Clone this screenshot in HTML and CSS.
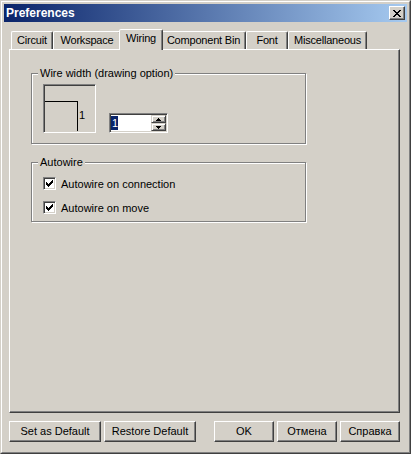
FILE: index.html
```html
<!DOCTYPE html>
<html lang="en">
<head>
    <meta charset="UTF-8">
    <title>Preferences</title>
    <link rel="stylesheet" href="styles.css">
</head>
<body>
    <div class="window">
        <div class="frame">
            <div class="titlebar">
                <span class="title">Preferences</span>
                <span class="close">
                    <svg width="8" height="7" viewBox="0 0 8 7"><path d="M0 0h2v1H0z M6 0h2v1H6z M1 1h2v1H1z M5 1h2v1H5z M2 2h4v1H2z M3 3h2v1H3z M2 4h4v1H2z M1 5h2v1H1z M5 5h2v1H5z M0 6h2v1H0z M6 6h2v1H6z" fill="#000"/></svg>
                </span>
            </div>

            <div class="client">
                <div class="tabs">
                    <div class="tab t-circuit">Circuit</div>
                    <div class="tab t-workspace">Workspace</div>
                    <div class="tab t-wiring active">Wiring</div>
                    <div class="tab t-bin">Component Bin</div>
                    <div class="tab t-font">Font</div>
                    <div class="tab t-misc">Miscellaneous</div>
                </div>

                <div class="panel">
                    <div class="group wire-group">
                        <div class="caption">Wire width (drawing option)</div>
                        <div class="wire-row">
                            <div class="preview">
                                <svg width="49" height="45" viewBox="0 0 49 45">
                                    <path d="M0 15.5H33 M32.5 15V45" stroke="#000" stroke-width="1" fill="none"/>
                                    <text x="34" y="33" class="preview-num">1</text>
                                </svg>
                            </div>
                            <div class="spin">
                                <div class="spin-field"><span class="selected">1</span></div>
                                <div class="spin-buttons">
                                    <div class="spin-btn">
                                        <svg width="5" height="3" viewBox="0 0 5 3"><path d="M2 0h1v1H2z M1 1h3v1H1z M0 2h5v1H0z" fill="#000"/></svg>
                                    </div>
                                    <div class="spin-btn">
                                        <svg width="5" height="3" viewBox="0 0 5 3"><path d="M0 0h5v1H0z M1 1h3v1H1z M2 2h1v1H2z" fill="#000"/></svg>
                                    </div>
                                </div>
                            </div>
                        </div>
                    </div>

                    <div class="group auto-group">
                        <div class="caption">Autowire</div>
                        <div class="check-row first">
                            <span class="checkbox">
                                <svg width="11" height="11" viewBox="0 0 11 11"><path d="M2 4h1v3H2z M3 5h1v3H3z M4 6h1v3H4z M5 5h1v3H5z M6 4h1v3H6z M7 3h1v3H7z M8 2h1v3H8z" fill="#000"/></svg>
                            </span>
                            <span>Autowire on connection</span>
                        </div>
                        <div class="check-row">
                            <span class="checkbox">
                                <svg width="11" height="11" viewBox="0 0 11 11"><path d="M2 4h1v3H2z M3 5h1v3H3z M4 6h1v3H4z M5 5h1v3H5z M6 4h1v3H6z M7 3h1v3H7z M8 2h1v3H8z" fill="#000"/></svg>
                            </span>
                            <span>Autowire on move</span>
                        </div>
                    </div>
                </div>

                <div class="buttons">
                    <div class="btn b-default">Set as Default</div>
                    <div class="btn b-restore">Restore Default</div>
                    <div class="btn b-ok">OK</div>
                    <div class="btn b-cancel">Отмена</div>
                    <div class="btn b-help">Справка</div>
                </div>
            </div>
        </div>
    </div>
</body>
</html>
```

FILE: styles.css
```css
* {
    margin: 0;
    padding: 0;
    box-sizing: border-box;
}

body {
    background-color: #d4d0c8;
    font-family: "Liberation Sans", Arial, sans-serif;
    font-size: 11px;
    color: #000;
}

.window {
    width: 411px;
    height: 454px;
    border: 1px solid;
    border-color: #d4d0c8 #404040 #404040 #d4d0c8;
}

.frame {
    height: 100%;
    border: 1px solid;
    border-color: #fff #808080 #808080 #fff;
    padding: 2px;
    display: flex;
    flex-direction: column;
}

/* title bar */
.titlebar {
    height: 18px;
    background: linear-gradient(to right, #0a246a, #a6caf0);
    display: flex;
    align-items: center;
    justify-content: space-between;
    padding: 0 2px 0 2px;
}

.title {
    color: #fff;
    font-weight: bold;
    font-size: 12px;
}

.close {
    width: 16px;
    height: 14px;
    background-color: #d4d0c8;
    border: 1px solid;
    border-color: #fff #404040 #404040 #fff;
    box-shadow: inset -1px -1px 0 #808080;
    display: flex;
    align-items: center;
    justify-content: center;
    padding-right: 1px;
}

.close svg {
    display: block;
}

.client {
    flex: 1;
    padding: 7px 0 0 5px;
}

/* tabs */
.tabs {
    display: flex;
    align-items: flex-end;
    height: 20px;
    padding-left: 2px;
}

.tab {
    height: 18px;
    border: 1px solid;
    border-bottom: 0;
    border-color: #fff #404040 transparent #fff;
    border-radius: 2px 2px 0 0;
    box-shadow: inset -1px 0 0 #808080;
    text-align: center;
    line-height: 17px;
    letter-spacing: -0.2px;
    white-space: nowrap;
}

.tab.active {
    height: 21px;
    margin: 0 -2px -1px;
    position: relative;
    z-index: 1;
    background-color: #d4d0c8;
}

.t-circuit { width: 42px; }
.t-workspace { width: 68px; }
.t-wiring { width: 44px; }
.t-bin { width: 85px; }
.t-font { width: 42px; }
.t-misc { width: 79px; }

.panel {
    width: 391px;
    height: 364px;
    border: 1px solid;
    border-color: #fff #404040 #404040 #fff;
    box-shadow: inset -1px -1px 0 #808080;
    padding: 23px 0 0 21px;
}

/* group boxes */
.group {
    width: 275px;
    border: 1px solid #808080;
    box-shadow: inset 1px 1px 0 #fff, 1px 1px 0 #fff;
}

.caption {
    width: max-content;
    background-color: #d4d0c8;
    line-height: 13px;
    padding: 0 2px;
    margin: -7px 0 0 6px;
}

.wire-group {
    height: 71px;
}

.wire-row {
    display: flex;
    align-items: flex-end;
    margin: 4px 0 0 11px;
}

.preview {
    width: 53px;
    height: 49px;
    border: 1px solid;
    border-color: #808080 #fff #fff #808080;
    box-shadow: inset 1px 1px 0 #404040, inset -1px -1px 0 #d4d0c8;
    padding: 1px;
}

.preview svg {
    display: block;
}

.preview-num {
    font-family: "Liberation Sans", Arial, sans-serif;
    font-size: 11px;
}

.spin {
    width: 59px;
    height: 20px;
    margin-left: 13px;
    border: 1px solid;
    border-color: #808080 #fff #fff #808080;
    box-shadow: inset 1px 1px 0 #404040, inset -1px -1px 0 #d4d0c8;
    background-color: #fff;
    padding: 1px;
    display: flex;
}

.spin-field {
    flex: 1;
    padding-top: 1px;
    line-height: 14px;
}

.selected {
    display: inline-block;
    background-color: #0a246a;
    color: #fff;
    padding: 0 0 0 1px;
}

.spin-buttons {
    width: 15px;
    display: flex;
    flex-direction: column;
}

.spin-btn {
    flex: 1;
    background-color: #d4d0c8;
    border: 1px solid;
    border-color: #d4d0c8 #404040 #404040 #d4d0c8;
    box-shadow: inset 1px 1px 0 #fff, inset -1px -1px 0 #808080;
    display: flex;
    align-items: center;
    justify-content: center;
}

.spin-btn svg {
    display: block;
}

.auto-group {
    height: 60px;
    margin-top: 18px;
}

.check-row {
    display: flex;
    align-items: center;
    gap: 5px;
    height: 17px;
    margin: 7px 0 0 11px;
}

.check-row.first {
    margin-top: 6px;
}

.checkbox {
    width: 13px;
    height: 13px;
    background-color: #fff;
    border: 1px solid;
    border-color: #808080 #fff #fff #808080;
    box-shadow: inset 1px 1px 0 #404040, inset -1px -1px 0 #d4d0c8;
}

.checkbox svg {
    display: block;
}

/* bottom buttons */
.buttons {
    display: flex;
    margin-top: 8px;
}

.btn {
    height: 21px;
    border: 1px solid;
    border-color: #fff #404040 #404040 #fff;
    box-shadow: inset -1px -1px 0 #808080;
    text-align: center;
    line-height: 18px;
}

.b-default { width: 92px; }
.b-restore { width: 92px; margin-left: 3px; }
.b-ok { width: 60px; margin-left: 18px; }
.b-cancel { width: 60px; margin-left: 3px; }
.b-help { width: 60px; margin-left: 3px; }
```
